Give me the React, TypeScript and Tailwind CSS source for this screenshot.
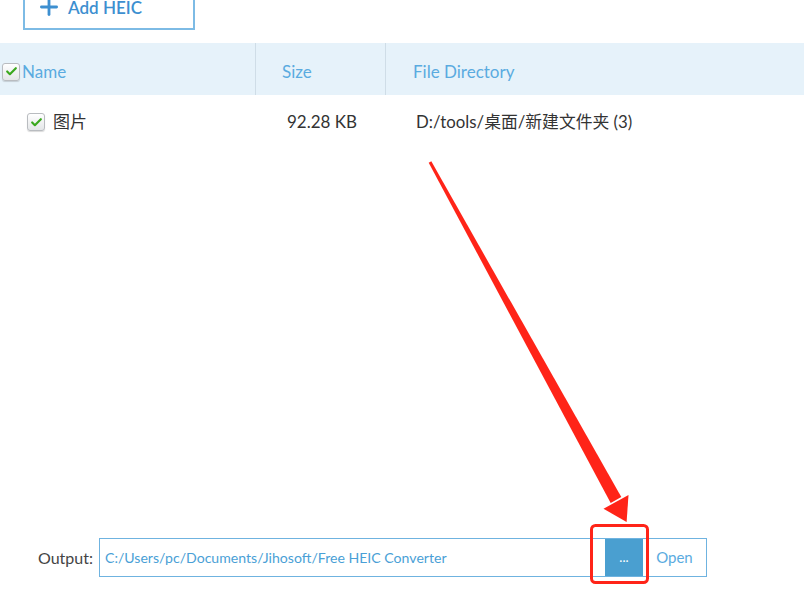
import { Check, Plus } from "lucide-react";

const Checkbox = () => {
  return (
    <div className="w-[18px] h-[18px] rounded-[3px] border border-[#b9bcc0] bg-gradient-to-b from-white to-[#e4e6e8] flex items-center justify-center shadow-[0_1px_1px_rgba(0,0,0,0.15)]">
      <Check size={13} strokeWidth={4} className="text-[#3aa81e]" />
    </div>
  );
};

const App = () => {
  return (
    <div className="relative w-[804px] h-[595px] bg-white overflow-hidden flex flex-col font-['Lato','Noto_Sans_CJK_SC',sans-serif]">
      {/* add button, cut off at the top */}
      <div className="pl-[23px] h-[43px]">
        <div className="relative -mt-[16px] w-[172px] h-[46px] border-2 border-[#7dbbe5] flex items-end pb-[12px] pl-[11px] gap-[6px]">
          <div className="absolute left-[4px] -top-[4px] w-[14px] h-[8px] rounded-full bg-[#f6c79a]" />
          <div className="absolute left-[116px] -top-[4px] w-[12px] h-[7px] rounded-full bg-[#bfe3a5]" />
          <Plus size={26} strokeWidth={2.6} className="text-[#3d8fd0] mb-[-4px]" />
          <span className="text-[17px] font-semibold text-[#3d8fd0] leading-none">Add HEIC</span>
        </div>
      </div>

      {/* table header */}
      <div className="h-[52px] bg-[#e6f2fa] flex items-stretch text-[17px] text-[#5aabe0]">
        <div className="w-[256px] flex items-center pl-[2px] pt-[5px] gap-[2px] border-r border-[#cfdde7]">
          <Checkbox />
          <span>Name</span>
        </div>
        <div className="w-[130px] flex items-center pl-[26px] pt-[5px] border-r border-[#cfdde7]">
          Size
        </div>
        <div className="flex-1 flex items-center pl-[27px] pt-[5px]">File Directory</div>
      </div>

      {/* file row */}
      <div className="h-[54px] flex items-center text-[17px] text-[#333]">
        <div className="w-[256px] flex items-center pl-[27px] gap-[8px]">
          <Checkbox />
          <span>图片</span>
        </div>
        <div className="w-[130px] pl-[31px]">92.28 KB</div>
        <div className="flex-1 pl-[30px] text-[16.8px]">D:/tools/桌面/新建文件夹 (3)</div>
      </div>

      <div className="flex-1" />

      {/* output */}
      <div className="flex items-center pl-[38px] pb-[18px] gap-[6px]">
        <span className="text-[16px] text-[#444]">Output:</span>
        <div className="w-[608px] h-[39px] border border-[#6fb3e0] flex items-stretch">
          <div className="flex-1 flex items-center pl-[5px] text-[14.1px] text-[#4a9fd6]">
            C:/Users/pc/Documents/Jihosoft/Free HEIC Converter
          </div>
          <div className="w-[38px] bg-[#4a9fd0] text-white text-[13px] flex items-center justify-center">
            ...
          </div>
          <div className="w-[63px] flex items-center justify-center text-[15px] text-[#5aabe0]">
            Open
          </div>
        </div>
      </div>

      {/* annotation */}
      <svg className="absolute inset-0 pointer-events-none" width="804" height="595">
        <polygon
          points="428.7,162.7 431.3,161.3 621.3,497.1 610.7,502.9"
          fill="#ff2418"
        />
        <polygon points="626.6,522 603.5,508.8 628.5,495" fill="#ff2418" />
        <rect
          x="591.5"
          y="525.5"
          width="56"
          height="57"
          rx="4"
          fill="none"
          stroke="#ff2418"
          strokeWidth="3"
        />
      </svg>
    </div>
  );
};

export default App;
